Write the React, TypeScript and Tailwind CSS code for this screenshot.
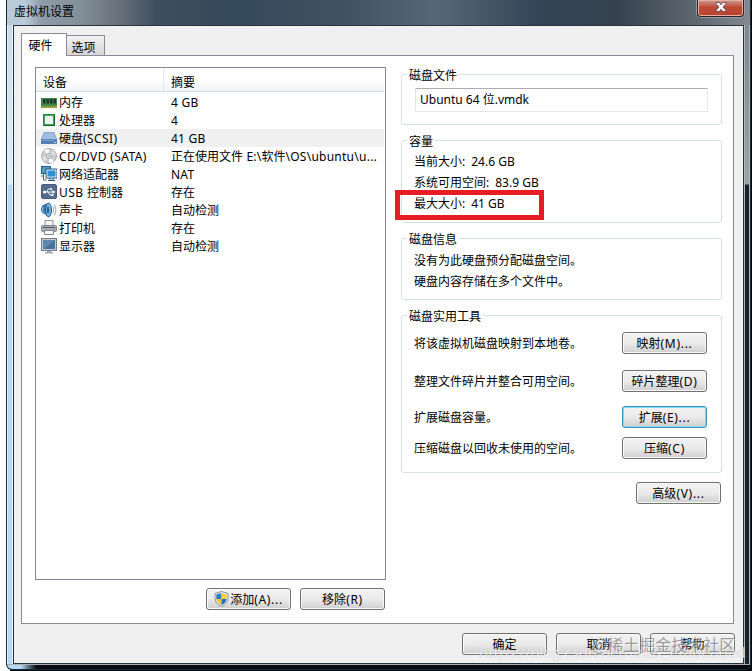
import React from 'react';
import clsx from 'clsx';

type IconName = 'memory' | 'cpu' | 'disk' | 'cd' | 'network' | 'usb' | 'sound' | 'printer' | 'display';

const devices: { icon: IconName; name: string; summary: string; selected?: boolean }[] = [
  { icon: 'memory', name: '内存', summary: '4 GB' },
  { icon: 'cpu', name: '处理器', summary: '4' },
  { icon: 'disk', name: '硬盘(SCSI)', summary: '41 GB', selected: true },
  { icon: 'cd', name: 'CD/DVD (SATA)', summary: '正在使用文件 E:\\软件\\OS\\ubuntu\\u...' },
  { icon: 'network', name: '网络适配器', summary: 'NAT' },
  { icon: 'usb', name: 'USB 控制器', summary: '存在' },
  { icon: 'sound', name: '声卡', summary: '自动检测' },
  { icon: 'printer', name: '打印机', summary: '存在' },
  { icon: 'display', name: '显示器', summary: '自动检测' },
];

const icons: Record<IconName, React.ReactNode> = {
  memory: (
    <>
      <rect x="0" y="4" width="16" height="8" fill="#3d8a45" />
      <path d="M2 5h2.500v4.500H2zM5.500 5H8v4.500H5.500zM9 5h2.500v4.500H9zM12.500 5H15v4.500h-2.500z" fill="#26352a" />
      <path d="M0 12h16v2H0z" fill="#a5a548" />
      <path d="M1 13h14" stroke="#5e7f37" strokeDasharray="1 1" />
    </>
  ),
  cpu: (
    <>
      <rect x="2.500" y="2.500" width="11" height="11" fill="#4fa563" stroke="#2a8046" />
      <rect x="4" y="4" width="8" height="8" rx="1" fill="#eef1ed" />
      <path d="M3 13.500h11M13.500 4v9" stroke="#145c2c" />
    </>
  ),
  disk: (
    <>
      <path d="M3 2h10l3 7v4H0V9z" fill="#6e93c0" />
      <path d="M3.500 2.500h9l3 6.500H.5z" fill="#9fbee0" />
      <path d="M0 9.500h16V14H0z" fill="#5680b3" />
      <path d="M1 10.500h12" stroke="#7ba1ce" />
      <path d="M13 12.500h2" stroke="#bfe7ee" />
    </>
  ),
  cd: (
    <>
      <circle cx="8" cy="8" r="7.500" fill="#cbcdd0" stroke="#a9abae" />
      <path d="M8 8 3 2.500A7 7 0 0 1 8 1zM8 8l5 5.500A7 7 0 0 1 8 15z" fill="#f7f7f7" />
      <path d="M8 8 1 9a7 7 0 0 0 3 4.500zM8 8l7-1a7 7 0 0 0-3-4.500z" fill="#e0e1e2" />
      <circle cx="8" cy="8" r="2.500" fill="#f5f5f5" stroke="#9c9ea0" />
      <circle cx="8" cy="8" r="1" fill="#a9abad" />
    </>
  ),
  network: (
    <>
      <rect x=".5" y=".5" width="9" height="7" fill="#4c9bd1" stroke="#285d8b" />
      <path d="M2.500 8v6M0 10h3M2.500 14h3" stroke="#2f6a99" />
      <rect x="5" y="3" width="11" height="9" fill="#e4edf5" stroke="#275a85" />
      <rect x="6.500" y="4.500" width="8" height="6" fill="#2f91d2" />
      <path d="M9 12v2M12 12v2M7 14.500h7" stroke="#275a85" />
    </>
  ),
  usb: (
    <>
      <rect x=".5" y=".5" width="15" height="14" rx="1.500" fill="#536c8b" stroke="#465e7b" />
      <path d="M3 8h10M5.500 8l2-3H10M7 8l2 3h2" stroke="#f3f6f9" fill="none" />
      <circle cx="3.500" cy="8" r="1.500" fill="#fff" />
      <path d="m11.500 6 3 2-3 2zM9.500 4H11v2H9.500zM10.500 10h2v2h-2z" fill="#fff" />
    </>
  ),
  sound: (
    <>
      <path d="M0 6q1-3 4-4l4-1v14l-4-3Q1 12 0 9z" fill="#3c78ad" />
      <path d="M2 5q-1 3 0 6" stroke="#9cc4e2" fill="none" />
      <ellipse cx="7.500" cy="8" rx="3" ry="6.800" fill="#7db3d9" stroke="#235e8f" />
      <ellipse cx="7" cy="8" rx="1.200" ry="3.500" fill="#24639a" />
      <path d="M11.800 4.500q2 3.500 0 7M13.500 2.500q3 5.500 0 11" stroke="#7fb0d8" fill="none" />
    </>
  ),
  printer: (
    <>
      <path d="M4 .5h8V6H4z" fill="#f3f4f5" stroke="#8f959c" />
      <rect x=".5" y="5.500" width="15" height="6" rx="1" fill="#a8adb5" stroke="#7e858f" />
      <path d="M2 7.500h12" stroke="#555b65" />
      <path d="M3.500 10.500h9v4h-9z" fill="#f7f8f9" stroke="#7e8590" />
      <path d="M13 9.500h1.500" stroke="#d66a74" />
    </>
  ),
  display: (
    <>
      <rect x=".5" y=".5" width="15" height="12" fill="#c3cad1" stroke="#747f8b" />
      <path d="M2 2h12v9H2z" fill="#49749f" />
      <path d="M2 2h12L3 11H2z" fill="#5f88b1" />
      <path d="M6 13h4v1H6zM4 14h8v1.500H4z" fill="#a1aab2" />
    </>
  ),
};

function DeviceIcon({ name }: { name: IconName }) {
  return (
    <svg viewBox="0 0 16 16" className="h-4 w-4 shrink-0">
      {icons[name]}
    </svg>
  );
}

function ShieldIcon() {
  return (
    <svg viewBox="0 0 15 16" className="-mt-[2px] h-4 w-[15px] shrink-0">
      <path d="M7.500.5 14 2.500v5q0 5-6.500 8-6.500-3-6.500-8v-5z" fill="#e8edf0" stroke="#8a939b" />
      <path d="M7.500 2v6H2.300V3.500z" fill="#2c7bc4" />
      <path d="M7.500 2v6h5.200V3.500z" fill="#f5d33c" />
      <path d="M2.300 8h5.200v6Q3 12 2.300 8z" fill="#f0c92c" />
      <path d="M12.700 8H7.500v6Q12 12 12.700 8z" fill="#2a72b8" />
    </svg>
  );
}

// Latin runs are set slightly wider than the Chinese text around them
function Mixed({ text, latin = 'tracking-[0.4px]' }: { text: string; latin?: string }) {
  const runs = text.split(/([\x20-\x7e]+)/).filter(Boolean);
  return (
    <span className="whitespace-pre">
      {runs.map((run, index) => (
        <span key={index} className={clsx(/^[\x20-\x7e]/.test(run) && latin)}>{run}</span>
      ))}
    </span>
  );
}

function WinButton({ label, icon, focused, className }: { label: string; icon?: React.ReactNode; focused?: boolean; className?: string }) {
  return (
    <button
      className={clsx(
        'flex h-[22px] w-[85px] shrink-0 items-center justify-center whitespace-nowrap rounded-[3px] border bg-linear-to-b from-[#f2f2f2] from-0% via-[#ebebeb] via-49% to-[#cfcfcf] pt-[2px]',
        focused ? 'border-[#3c8fb5] shadow-[inset_0_0_0_1px_#7fdcf8]' : 'border-[#707070] shadow-[inset_0_0_0_1px_#fafafa]',
        className
      )}
    >
      {icon}
      <Mixed text={label} latin="tracking-[0.7px]" />
    </button>
  );
}

function GroupBox({ title, className, children }: { title: string; className?: string; children: React.ReactNode }) {
  return (
    <section className={clsx('w-[321px] rounded-[3px] border border-[#d8e0e4]', className)}>
      <h2 className="-mt-[8px] ml-[5px] h-[18px] w-fit bg-white px-[2px] leading-[18px]">{title}</h2>
      {children}
    </section>
  );
}

const capacity = [
  { label: '当前大小:', value: '24.6 GB' },
  { label: '系统可用空间:', value: '83.9 GB' },
  { label: '最大大小:', value: '41 GB' },
];

const tools = [
  { text: '将该虚拟机磁盘映射到本地卷。', label: '映射(M)...', row: 'mt-[6px]' },
  { text: '整理文件碎片并整合可用空间。', label: '碎片整理(D)', row: 'mt-[16px]' },
  { text: '扩展磁盘容量。', label: '扩展(E)...', row: 'mt-[14px]', focused: true },
  { text: '压缩磁盘以回收未使用的空间。', label: '压缩(C)', row: 'mt-[9px]' },
];

export default function App() {
  return (
    <div className="relative h-[671px] w-[752px] overflow-hidden bg-linear-to-r from-[#fbfdff] from-[10px] to-[#05080b] to-[10px] text-[12px] leading-[18px] text-black [font-family:'Noto_Sans','Noto_Sans_CJK_SC',sans-serif]">
      <div className="h-full w-[6px] bg-[#fbfdff] float-left" />
      <div className="flex h-[670px] w-[745px] flex-col overflow-hidden rounded-b-[6px] border-x border-b border-[#182a3a] bg-[#090d12]">
        {/* Title bar */}
        <header className="flex h-[25px] shrink-0 justify-between bg-[linear-gradient(90deg,#b9cad8_0px,#b9cad8_18px,#8e9ca7_35px,#84909b_70px,#69737d_110px,#3e4e5d_150px,#34495b_230px,#405362_340px,#556878_430px,#334556_530px,#35424e_610px,#5e6871_690px,#838a91_745px)]">
          <h1 className="ml-[7px] mt-[3px]">虚拟机设置</h1>
          <button className="mr-[6px] flex h-[17px] w-[47px] items-center justify-center rounded-b-[4px] border border-t-0 border-[#2f2022] bg-linear-to-b from-[#cf9a91] from-0% via-[#be4a35] via-45% to-[#b8422d] shadow-[inset_0_0_0_1px_#e5b1a6,0_0_0_1px_#929da5]">
            <svg viewBox="0 0 12 10" className="-mt-[2px] h-[10px] w-3">
              <path d="M1 .5h3.200L6 2.700 7.800.5H11v1L8 5l3 3.500v1H7.800L6 7.300 4.200 9.500H1v-1L4 5 1 1.500z" fill="#fff" stroke="#4a4550" strokeWidth=".8" />
            </svg>
          </button>
        </header>

        <div className="flex h-[639px] shrink-0">
          <div className="w-[6px] shrink-0 border-x border-[#e6f4fd] bg-linear-to-b from-[#c8ddea] from-0% via-[#e0eef8] via-[159px] to-[#b5d9f3] to-[160px]" />
          <main className="flex w-[731px] shrink-0 flex-col border border-[#28333f] bg-[#f0f0f0]">
            {/* Tabs */}
            <div className="ml-[7px] mt-[7px] flex h-[22px] shrink-0 items-end">
              <div className="relative -mb-px flex h-[23px] w-[46px] justify-center border border-b-0 border-[#898c95] bg-white pr-[7px] pt-[3px]">硬件</div>
              <div className="flex h-[20px] w-[38px] justify-center border border-b-0 border-l-0 border-[#898c95] bg-linear-to-b from-[#f2f2f2] to-[#d6d6d6] pr-[4px] pt-[3px]">选项</div>
            </div>

            <div className="ml-[7px] flex h-[569px] w-[713px] shrink-0 border border-[#898c95] bg-white">
              {/* Device list */}
              <div className="ml-[13px] mt-[11px] w-[351px] shrink-0">
                <div className="h-[513px] border border-[#828790]">
                  <div className="mr-px flex h-[24px] border-b border-[#d8dce0] bg-linear-to-b from-white from-45% to-[#f2f3f5]">
                    <div className="w-[128px] border-r border-[#e3e6ea] pl-[7px] pt-[6px]">设备</div>
                    <div className="pl-[7px] pt-[6px]">摘要</div>
                  </div>
                  <ul className="mr-px pt-[1px]">
                    {devices.map((device) => (
                      <li key={device.name} className={clsx('flex h-[18px] items-center pl-[5px]', device.selected && 'bg-[#f0f0f0]')}>
                        <DeviceIcon name={device.icon} />
                        <span className="ml-[2px] w-[112px] shrink-0 pt-[2px]">
                          <Mixed text={device.name} />
                        </span>
                        <span className="pt-[2px]">
                          <Mixed text={device.summary} latin="tracking-[0.25px]" />
                        </span>
                      </li>
                    ))}
                  </ul>
                </div>
                <div className="mr-px mt-[8px] flex justify-end gap-[9px]">
                  <WinButton label="添加(A)..." icon={<ShieldIcon />} className="gap-px" />
                  <WinButton label="移除(R)" />
                </div>
              </div>

              {/* Disk settings */}
              <div className="ml-[15px] mt-[18px]">
                <GroupBox title="磁盘文件" className="h-[51px]">
                  <input
                    readOnly
                    value="Ubuntu 64 位.vmdk"
                    className="ml-[13px] mt-[3px] block h-[24px] w-[293px] rounded-[1px] border border-[#e2e6ec] border-t-[#abadb3] pb-[3px] pl-[4px] outline-none"
                  />
                </GroupBox>
                <GroupBox title="容量" className="relative mt-[15px] h-[83px]">
                  <div className="ml-[12px] leading-[21px]">
                    {capacity.map((item) => (
                      <p key={item.label} className="flex gap-[6px]">
                        <span>{item.label}</span>
                        <span>{item.value}</span>
                      </p>
                    ))}
                  </div>
                  <div className="absolute -left-[7px] top-[49px] h-[30px] w-[149px] border-[5px] border-[#e81c25]" />
                </GroupBox>
                <GroupBox title="磁盘信息" className="mt-[15px] h-[62px]">
                  <div className="ml-[12px] mt-[1px] leading-[21px]">
                    <p>没有为此硬盘预分配磁盘空间。</p>
                    <p>硬盘内容存储在多个文件中。</p>
                  </div>
                </GroupBox>
                <GroupBox title="磁盘实用工具" className="mt-[15px] h-[158px]">
                  {tools.map((tool) => (
                    <div key={tool.label} className={clsx('ml-[12px] mr-[14px] flex items-center justify-between', tool.row)}>
                      <span className="pt-[2px]">{tool.text}</span>
                      <WinButton label={tool.label} focused={tool.focused} />
                    </div>
                  ))}
                </GroupBox>
                <WinButton label="高级(V)..." className="ml-[235px] mt-[9px]" />
              </div>
            </div>

            <footer className="mr-[8px] mt-[9px] flex justify-end gap-[9px]">
              <WinButton label="确定" />
              <WinButton label="取消" />
              <WinButton label="帮助" />
            </footer>
          </main>
          <div className="w-[6px] shrink-0 border-x border-[#aeb9bf] bg-linear-to-b from-[#81888e] from-0% via-[#9fa2a5] via-[159px] to-[#182328] to-[160px]" />
        </div>
        <div className="flex-1 border-t border-[#a8adb2] bg-linear-to-r from-[#b5d9f3] from-[14px] to-[#080a10] to-[30px]" />
      </div>

      {/* Watermarks */}
      <div className="absolute left-[479px] top-[641px] whitespace-nowrap font-['Open_Sans'] text-[15px] leading-[22px] text-white/70 [text-shadow:0_0_1px_#9999]">https://blog.csdn.net/linux_embedded</div>
      <div className="absolute left-[592px] top-[633px] whitespace-nowrap font-['Noto_Sans_CJK_SC'] text-[16px] leading-[22px] text-[#777]/70 [text-shadow:1px_1px_0_#fff8]">@稀土掘金技术社区</div>
    </div>
  );
}
